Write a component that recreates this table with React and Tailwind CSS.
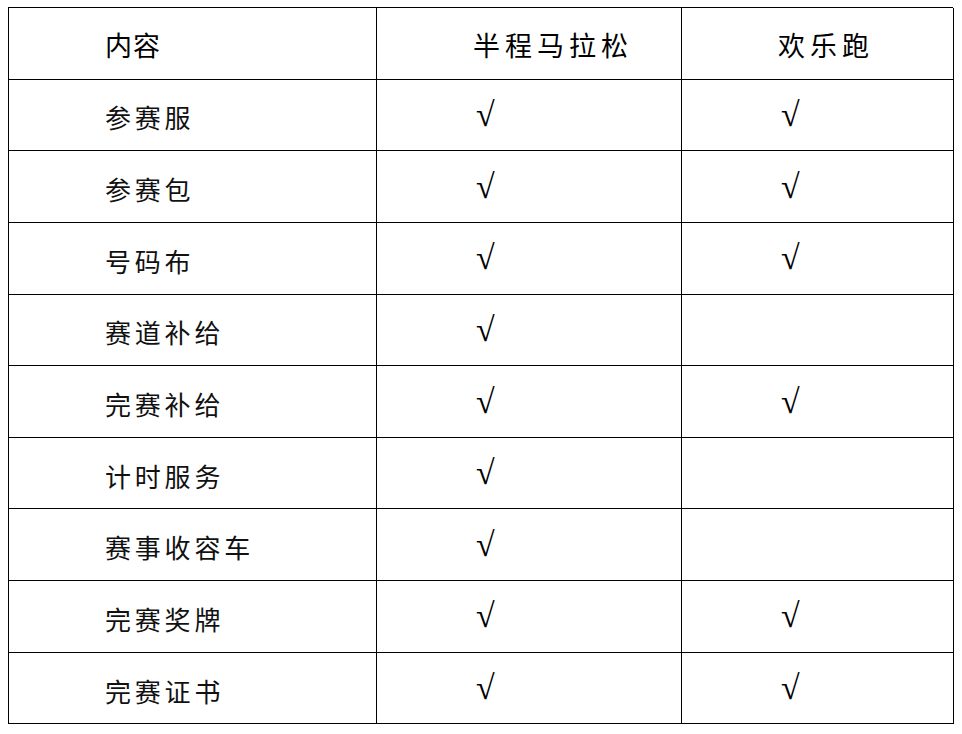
import React from "react";

const rows = [
  { name: "参赛服", half: true, fun: true },
  { name: "参赛包", half: true, fun: true },
  { name: "号码布", half: true, fun: true },
  { name: "赛道补给", half: true, fun: false },
  { name: "完赛补给", half: true, fun: true },
  { name: "计时服务", half: true, fun: false },
  { name: "赛事收容车", half: true, fun: false },
  { name: "完赛奖牌", half: true, fun: true },
  { name: "完赛证书", half: true, fun: true },
];

const cell =
  "h-[71.65px] border-r-[1.5px] border-b-[1.5px] border-black flex items-center pl-[96px] pt-[4px]";

const Check = () => (
  <span
    className="text-[34px] text-black leading-none ml-[3px] -mt-[4px]"
    style={{ fontFamily: '"Liberation Serif", "DejaVu Serif", serif' }}
  >
    √
  </span>
);

export default function App() {
  return (
    <div
      className="bg-white min-h-screen pl-[8px] pt-[7px]"
      style={{ fontFamily: '"Noto Sans CJK SC", "Noto Sans", sans-serif' }}
    >
      <div className="w-[945px] grid grid-cols-[368px_305px_272px] border-l-[1.5px] border-t-[1.5px] border-black text-black">
        <div className={cell}>
          <span className="text-[27px] tracking-[1px]">内容</span>
        </div>
        <div className={cell}>
          <span className="text-[27px] tracking-[5px]">半程马拉松</span>
        </div>
        <div className={cell}>
          <span className="text-[27px] tracking-[5px]">欢乐跑</span>
        </div>
        {rows.map((r) => (
          <React.Fragment key={r.name}>
            <div className={cell}>
              <span className="text-[26px] tracking-[3.8px] text-[#111]">
                {r.name}
              </span>
            </div>
            <div className={cell}>{r.half && <Check />}</div>
            <div className={cell}>{r.fun && <Check />}</div>
          </React.Fragment>
        ))}
      </div>
    </div>
  );
}
